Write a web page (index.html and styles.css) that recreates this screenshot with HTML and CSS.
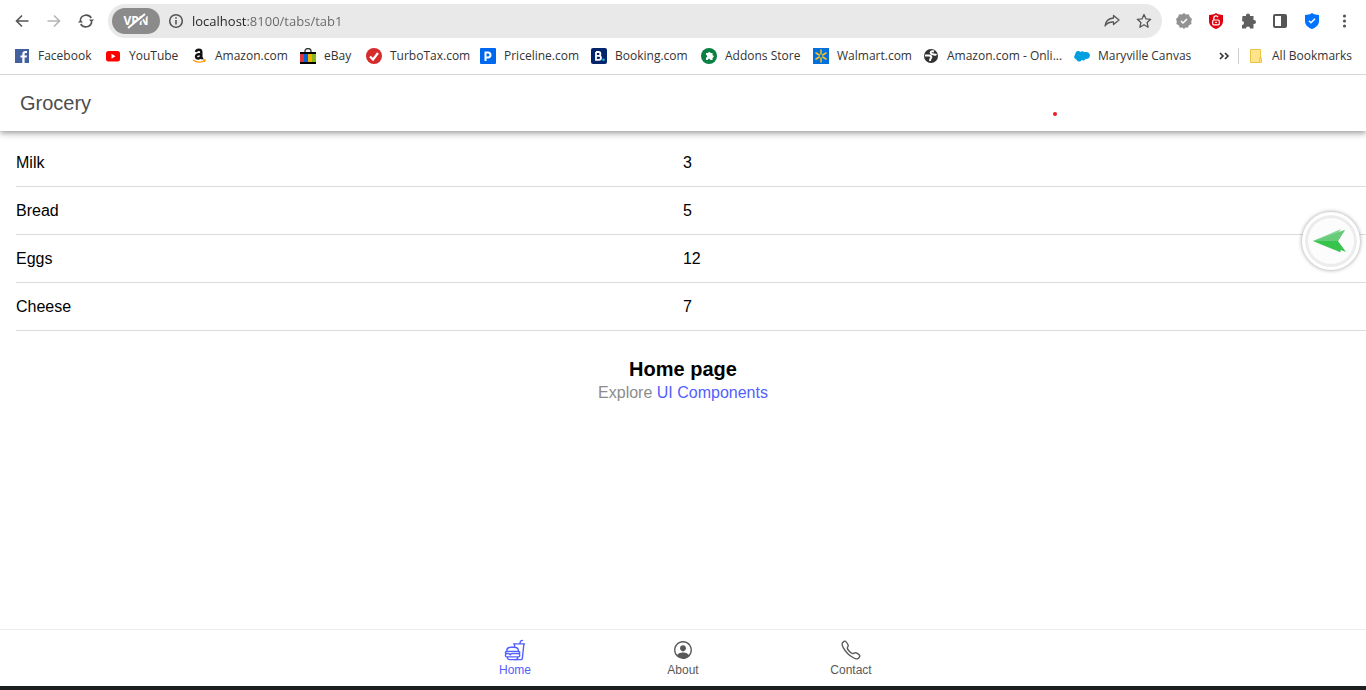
FILE: index.html
```html
<!DOCTYPE html>
<html lang="en">
<head>
<meta charset="utf-8">
<meta name="viewport" content="width=device-width, initial-scale=1">
<title>Grocery</title>
<link rel="stylesheet" href="styles.css">
</head>
<body>
<header class="browser">
  <div class="toolbar">
    <nav class="nav-buttons" aria-label="History">
      <button class="icon-btn" aria-label="Back"><svg viewBox="0 0 16 16" class="line"><path d="M14.500 8H2.500M8 2.500L2.500 8L8 13.500"/></svg></button>
      <button class="icon-btn faded" aria-label="Forward"><svg viewBox="0 0 16 16" class="line"><path d="M1.500 8H13.500M8 2.500L13.500 8L8 13.500"/></svg></button>
      <button class="icon-btn" aria-label="Reload"><svg viewBox="0 0 16 16" class="line"><path d="M2.300 7A6 6 0 0 1 13.300 5M13.700 9A6 6 0 0 1 2.700 11"/><path class="solid" d="M0 9.500h5L2.500 6.500zM11 6.500h5L13.500 9.500z"/></svg></button>
    </nav>
    <div class="address">
      <button class="vpn" aria-label="VPN off">VPN<svg viewBox="0 0 26 18"><path d="M6 17L24 3" stroke="#8b8b8b" stroke-width="2"/><path d="M5 16L22 2" stroke="#fff" stroke-width="2"/></svg></button>
      <button class="icon-btn info" aria-label="Site information"><svg viewBox="0 0 16 16" class="line"><circle cx="8" cy="8" r="6.300"/><path d="M8 7v4.500M8 4.300v1.500"/></svg></button>
      <input class="url" type="text" aria-label="Address" value="localhost:8100/tabs/tab1">
      <button class="icon-btn" aria-label="Share"><svg viewBox="0 0 16 16" class="line thin"><path d="M9.500 2.500L15 7L9.500 11.500V9C5.500 8.800 3 10 1 13C1.500 8.500 4.500 5.500 9.500 5z"/></svg></button>
      <button class="icon-btn" aria-label="Bookmark this page"><svg viewBox="0 0 16 16" class="line thin"><path d="M8 1.500l1.900 4.300 4.800.5-3.600 3.200 1 4.700L8 11.800l-4.100 2.400 1-4.700L1.300 6.300l4.800-.5z"/></svg></button>
    </div>
    <div class="extensions">
      <button class="icon-btn" aria-label="Verified"><svg viewBox="0 0 16 16"><path fill="#929292" d="M8 0l2 1.500 2.800-.2.900 2.500L16 6l-.8 2.500.3 2.400-2.600 1.400-1 2.500-2.500-.2L8 16l-1.700-1.400-2.500.2-1-2.500-2.400-1.400.4-2.400L0 6l2.200-2.200.9-2.500 2.800.2z"/><path d="M5 8l2 2 4-4" fill="none" stroke="#fff" stroke-width="1.500"/></svg></button>
      <button class="icon-btn" aria-label="Unlock"><svg viewBox="0 0 16 16"><path fill="#e00010" d="M8 0c2 1.500 4.500 1.800 7 2v6c0 4-3 6.500-7 8C4 14.500 1 12 1 8V2c2.500-.2 5-.5 7-2z"/><path d="M5.800 7V5a2.200 2.200 0 0 1 4.200-.8" fill="none" stroke="#fff" stroke-width="1.300"/><rect x="4.700" y="7" width="6.600" height="4.800" rx="1" fill="none" stroke="#fff" stroke-width="1.200"/><path d="M7 9.400h2" stroke="#fff"/></svg></button>
      <button class="icon-btn" aria-label="Extensions"><svg viewBox="0 0 16 16" fill="#5f5f5f"><path d="M2.500 3H6V2.400a2 2 0 0 1 4 0V3h3.500v4H14a2 2 0 0 1 0 4h-.5v4.500H10a2 2 0 0 0-4 0H2V12a2 2 0 0 0 0-4z"/></svg></button>
      <button class="icon-btn" aria-label="Side panel"><svg viewBox="0 0 16 16"><rect x="2" y="2" width="12" height="12" rx="1" fill="none" stroke="#555" stroke-width="2"/><path d="M9 2h5v12H9z" fill="#555"/></svg></button>
      <button class="icon-btn" aria-label="Protection"><svg viewBox="0 0 16 16"><path fill="#0073ff" d="M8 0c2 1.500 4.500 1.800 7 2v6c0 4-3 6.500-7 8C4 14.500 1 12 1 8V2c2.500-.2 5-.5 7-2z"/><path d="M5 7.700l2 2 4-4" fill="none" stroke="#fff" stroke-width="1.500"/></svg></button>
      <button class="icon-btn" aria-label="Browser menu"><svg viewBox="0 0 16 16" fill="#555"><circle cx="8.500" cy="3" r="1.600"/><circle cx="8.500" cy="8" r="1.600"/><circle cx="8.500" cy="13" r="1.600"/></svg></button>
    </div>
  </div>
  <nav class="bookmarks" aria-label="Bookmarks">
    <a href="#"><svg viewBox="0 0 16 16"><path fill="#4460a0" d="M1 1h14v14H1z"/><path fill="#fff" d="M8.300 15V9.500H6.500v-2h1.800V6c0-2 1.200-3 3-3H13v2h-1.200c-.8 0-1.200.4-1.200 1.100v1.400H13l-.4 2h-2V15z"/></svg>Facebook</a>
    <a href="#"><svg viewBox="0 0 16 16"><rect x="1" y="3" width="14" height="10.500" rx="2.500" fill="#f00"/><path d="M6.500 5.700v5l4-2.500z" fill="#fff"/></svg>YouTube</a>
    <a href="#"><svg viewBox="0 0 16 16"><path fill="none" stroke="#111" stroke-width="2.400" d="M5 4C5.500 1 10.300 1 10.300 4v5.500l1.500 1.500M10 6C6.500 6 5 6.700 5 8.500c0 3 4.500 2.500 5.200-.5"/><path d="M2 12c4 2.800 8 2.800 11.500.5M12 12h2l-.5 2" fill="none" stroke="#ff9900" stroke-width="1.300"/></svg>Amazon.com</a>
    <a href="#"><svg viewBox="0 0 16 16"><path d="M5 5V3a3 2.500 0 0 1 6 0v2" fill="none" stroke="#333" stroke-width="1.300"/><path d="M0 4h16v4H0zM0 14h16v2H0z"/><path fill="#e53238" d="M0 6h4v8H0z"/><path fill="#0064d2" d="M4 6h4v8H4z"/><path fill="#f5af02" d="M8 6h4v8H8z"/><path fill="#86b817" d="M12 6h4v8h-4z"/></svg>eBay</a>
    <a href="#"><svg viewBox="0 0 16 16"><circle cx="8" cy="8" r="8" fill="#d52b2b"/><path d="M4 8.500l3 3L12 5" fill="none" stroke="#fff" stroke-width="2.200"/></svg>TurboTax.com</a>
    <a href="#"><svg viewBox="0 0 16 16"><rect width="16" height="16" rx="1" fill="#0068ef"/><path d="M5.500 13V4.500H8a2.500 2.500 0 0 1 0 5H6" fill="none" stroke="#fff" stroke-width="2"/></svg>Priceline.com</a>
    <a href="#"><svg viewBox="0 0 16 16"><rect width="16" height="16" rx="2" fill="#04246b"/><path d="M5 4h2.500a1.900 1.900 0 0 1 0 3.800H5m0 0h3a2 2 0 0 1 0 4H5V4" fill="none" stroke="#fff" stroke-width="1.800"/><circle cx="12.500" cy="11.800" r="1.200" fill="#22b8ed"/></svg>Booking.com</a>
    <a href="#"><svg viewBox="0 0 16 16"><circle cx="8" cy="8" r="8" fill="#0b8043"/><path fill="#fff" d="M5 5h2a1.300 1.300 0 0 1 2.500 0h2v2.300a1.200 1.200 0 0 1 0 2.400V12H9.300a1.200 1.200 0 0 0-2.400 0H5V9.500A1.200 1.200 0 0 0 5 7z"/></svg>Addons Store</a>
    <a href="#"><svg viewBox="0 0 16 16"><path fill="#0071dc" d="M0 0h16v16H0z"/><path d="M8 2v4M8 10v4M3 5l3.300 2M9.700 9l3.300 2M3 11l3.300-2M9.700 7L13 5" stroke="#ffc220" stroke-width="1.500" stroke-linecap="round"/></svg>Walmart.com</a>
    <a href="#"><svg viewBox="0 0 16 16"><circle cx="8" cy="8" r="7" fill="#333"/><path fill="none" stroke="#fff" stroke-width="1.900" d="M11 3.500C8 2.800 7 4 8 5.500s4 .5 5.500 1.500M2 7.500h4c2 0 3 1.500 2 2.500s-1 1-1 3"/></svg>Amazon.com - Onli...</a>
    <a href="#"><svg viewBox="0 0 16 16"><path fill="#009fdf" d="M1.500 5c1-2.300 3.500-2.500 5-.9 1-1.200 3-1.100 4 .2 3-1 5.400.7 5.400 3.200 0 2.700-2.400 3.900-4.400 3.500-1 1.800-2.700 1.800-3.800 1.100-1.600 2.500-4.400 1.600-5-.4C.5 11.500-.8 8 1 7z"/></svg>Maryville Canvas</a>
    <button class="more" aria-label="More bookmarks"><svg viewBox="0 0 16 16" class="line"><path d="M4 5l3 3-3 3M9 5l3 3-3 3"/></svg></button>
    <a class="all" href="#"><svg viewBox="0 0 16 16"><path fill="#ffe48c" stroke="#e9c548" d="M2.500 1.500h10v9h1v4h-11z"/><path d="M11.500 14v-4h2" fill="none" stroke="#e9c548"/></svg>All Bookmarks</a>
  </nav>
</header>
<div class="app">
  <header class="app-header"><h1>Grocery</h1></header>
  <main class="content">
    <table class="groceries" aria-label="Grocery list">
      <tbody>
        <tr><th scope="row">Milk</th><td>3</td></tr>
        <tr><th scope="row">Bread</th><td>5</td></tr>
        <tr><th scope="row">Eggs</th><td>12</td></tr>
        <tr><th scope="row">Cheese</th><td>7</td></tr>
      </tbody>
    </table>
    <section class="intro">
      <h2>Home page</h2>
      <p>Explore <a href="#">UI Components</a></p>
    </section>
  </main>
  <nav class="tabs" aria-label="Tabs">
    <a class="active" href="#"><svg viewBox="0 0 512 512" class="outline"><path d="M322 416c0 35.350-20.650 64-56 64H134c-35.350 0-56-28.650-56-64M336 336c17.670 0 32 17.910 32 40s-14.330 40-32 40H64c-17.670 0-32-17.910-32-40s14.330-40 32-40"/><path d="M344 336H179.310a8 8 0 0 0-5.650 2.340l-26.830 26.830a4 4 0 0 1-5.660 0l-26.830-26.830a8 8 0 0 0-5.650-2.340H56a24 24 0 0 1 0-48h288a24 24 0 0 1 0 48zM64 276c0-55 45-84 100-84h72c55 0 100 29 100 84M241 112l7.440 64M256 480h139.310a32 32 0 0 0 31.910-29.610L463 112M368 112l16-64 47-16M224 112h256"/></svg>Home</a>
    <a href="#"><svg viewBox="0 0 512 512" fill="currentColor"><path fill-rule="evenodd" d="M258.900 48C141.920 46.420 46.420 141.920 48 258.900c1.560 112.190 92.910 203.540 205.100 205.100 117 1.600 212.480-93.900 210.880-210.880C462.440 140.910 371.090 49.560 258.900 48zM385.320 375.250a4 4 0 0 1-6.140-.32 124.270 124.270 0 0 0-32.350-29.590C321.370 329 289.110 320 256 320s-65.370 9-90.830 25.340a124.240 124.240 0 0 0-32.350 29.580 4 4 0 0 1-6.140.32A175.320 175.320 0 0 1 80 259c-1.630-97.310 78.220-178.760 175.570-179S432 158.810 432 256a175.320 175.320 0 0 1-46.680 119.250z"/><path d="M256 144c-19.720 0-37.550 7.390-50.220 20.820s-19 32-17.570 51.930C191.110 256 221.520 288 256 288s64.830-32 67.790-71.240c1.480-19.740-4.800-38.140-17.680-51.820C293.390 151.440 275.590 144 256 144z"/><path d="M120 375c30-40 80-58 136-58s106 18 136 58c-35 42-80 66-136 66s-101-24-136-66z"/></svg>About</a>
    <a href="#"><svg viewBox="0 0 512 512" class="outline"><path d="M451 374c-15.880-16-54.340-39.350-73-48.760-24.300-12.240-26.300-13.240-45.400.95-12.740 9.470-21.210 17.930-36.120 14.750s-47.310-21.110-75.680-49.390-47.340-61.620-50.530-76.480 5.410-23.230 14.790-36c13.220-18 12.220-21 .92-45.300-8.810-18.900-32.840-57-48.900-72.800C119.900 44 119.900 47 108.830 51.600A160.150 160.150 0 0 0 83 65.370C67 76 58.120 84.830 51.910 98.100s-9 44.380 23.070 102.640 54.570 88.050 101.140 134.490S258.500 406.640 310.850 436c64.760 36.270 89.600 29.200 102.910 23s22.180-15 32.830-31a159.090 159.090 0 0 0 13.800-25.800C465 391.170 468 391.170 451 374z"/></svg>Contact</a>
  </nav>
  <span class="marker"></span>
  <button class="assistant" aria-label="Open assistant"><svg viewBox="0 0 36 28"><path d="M3 16l26 10-5-6z" fill="#ddd"/><path d="M0 14L28 2l-2 3 6-2-7 11z" fill="#87d596"/><path d="M0 14L32 3l-7 11z" fill="#68cb79"/><path d="M0 14l27 11 1-2 5 2-8-11z" fill="#36c44c"/></svg></button>
</div>
<div class="taskbar"></div>
</body>
</html>
```
FILE: styles.css
```css
* { box-sizing: border-box; }
body {
  margin: 0;
  min-height: 100vh;
  display: flex;
  flex-direction: column;
  background: #fff;
  color: #000;
  font: 16px/20px "Liberation Sans", Arial, sans-serif;
}
a { color: inherit; text-decoration: none; }
button { border: 0; padding: 0; background: none; color: inherit; font: inherit; }
svg { display: block; flex: none; }

.browser {
  position: relative;
  z-index: 1;
  border-bottom: 1px solid #d8d8d8;
  background: #fff;
  color: #333;
  font: 12px/16px "Open Sans", "Segoe UI", sans-serif;
}
.toolbar { display: flex; align-items: center; padding: 4px 14px 0; }
.nav-buttons { display: flex; gap: 16px; margin-right: 14px; }
.icon-btn { width: 16px; height: 16px; color: #555; flex: none; }
.icon-btn svg { width: 16px; height: 16px; }
.faded { color: #b5b5b5; }
.line { fill: none; stroke: currentColor; stroke-width: 1.6; }
.line.thin { stroke-width: 1.3; stroke-linejoin: round; }
.line .solid { fill: currentColor; stroke: none; }
.address {
  flex: 1;
  display: flex;
  align-items: center;
  gap: 16px;
  height: 34px;
  padding: 0 10px 0 4px;
  border-radius: 17px;
  background: #e9e9e9;
}
.vpn {
  position: relative;
  width: 48px;
  height: 26px;
  border-radius: 13px;
  background: #8b8b8b;
  color: #fff;
  font: bold 12px/26px "Open Sans", sans-serif;
}
.vpn svg { position: absolute; inset: 4px 11px; width: 26px; height: 18px; }
.info { margin-left: -8px; }
.url {
  flex: 1;
  min-width: 0;
  margin-left: -8px;
  padding: 0;
  border: 0;
  outline: 0;
  font: 13px/20px "Open Sans", "Segoe UI", sans-serif;
  color: transparent;
  background: linear-gradient(90deg, #222 55px, #666 55px);
  background-clip: text;
  -webkit-background-clip: text;
}
.extensions { display: flex; gap: 16px; margin-left: 14px; }
.bookmarks {
  display: grid;
  grid-template-columns: 91px 86px 109px 66px 114px 111px 110px 112px 110px 151px 142px 1fr auto;
  align-items: center;
  height: 36px;
  padding: 0 14px;
  white-space: nowrap;
}
.bookmarks a { display: flex; align-items: center; gap: 8px; }
.bookmarks svg { width: 16px; height: 16px; }
.more { justify-self: end; margin-right: 6px; }
.bookmarks .all { padding-left: 9px; border-left: 1px solid #ccc; }

.app { position: relative; flex: 1; display: flex; flex-direction: column; }
.app-header {
  padding: 16px 20px;
  box-shadow: 0 2px 4px -1px rgba(0,0,0,.2), 0 4px 5px rgba(0,0,0,.14), 0 1px 10px rgba(0,0,0,.12);
}
.app-header h1 { margin: 0; color: #4d4d4d; font-size: 20px; line-height: 24px; font-weight: 400; }
.content { flex: 1; padding-top: 8px; }
.groceries {
  width: calc(100% - 16px);
  margin-left: 16px;
  table-layout: fixed;
  border-collapse: separate;
  border-spacing: 0;
}
.groceries th, .groceries td {
  height: 48px;
  padding: 0;
  border-bottom: 1px solid #dbdbdb;
  font-weight: 400;
  text-align: left;
}
.groceries th { width: 49.4%; }
.intro { padding-top: 26px; text-align: center; }
.intro h2 { margin: 0; font-size: 20px; line-height: 24px; }
.intro p { margin: 0; line-height: 24px; color: #8c8c8c; }
.intro a { color: #5260ff; }

.tabs {
  display: flex;
  justify-content: center;
  height: 57px;
  border-top: 1px solid #ededed;
  color: #595959;
  font-size: 12px;
  line-height: 16px;
}
.tabs a {
  width: 168px;
  display: flex;
  flex-direction: column;
  align-items: center;
  justify-content: center;
  gap: 1px;
}
.tabs svg { width: 22px; height: 22px; }
.tabs .active { color: #5260ff; }
.outline { fill: none; stroke: currentColor; stroke-width: 32; stroke-linecap: round; stroke-linejoin: round; }

.marker {
  position: absolute;
  top: 37px;
  right: 309px;
  width: 4px;
  height: 4px;
  border-radius: 50%;
  background: #ed1c24;
}
.assistant {
  position: absolute;
  top: 137px;
  right: 6px;
  width: 58px;
  height: 58px;
  display: grid;
  place-items: center;
  border: 3px solid #fff;
  border-radius: 50%;
  background: #fcfcfc;
  box-shadow: inset 0 0 0 3px #ececec, 0 0 4px rgba(0,0,0,.4);
}
.assistant svg { width: 36px; height: 28px; }
.taskbar { height: 4px; background: #1c1f20; }
```
